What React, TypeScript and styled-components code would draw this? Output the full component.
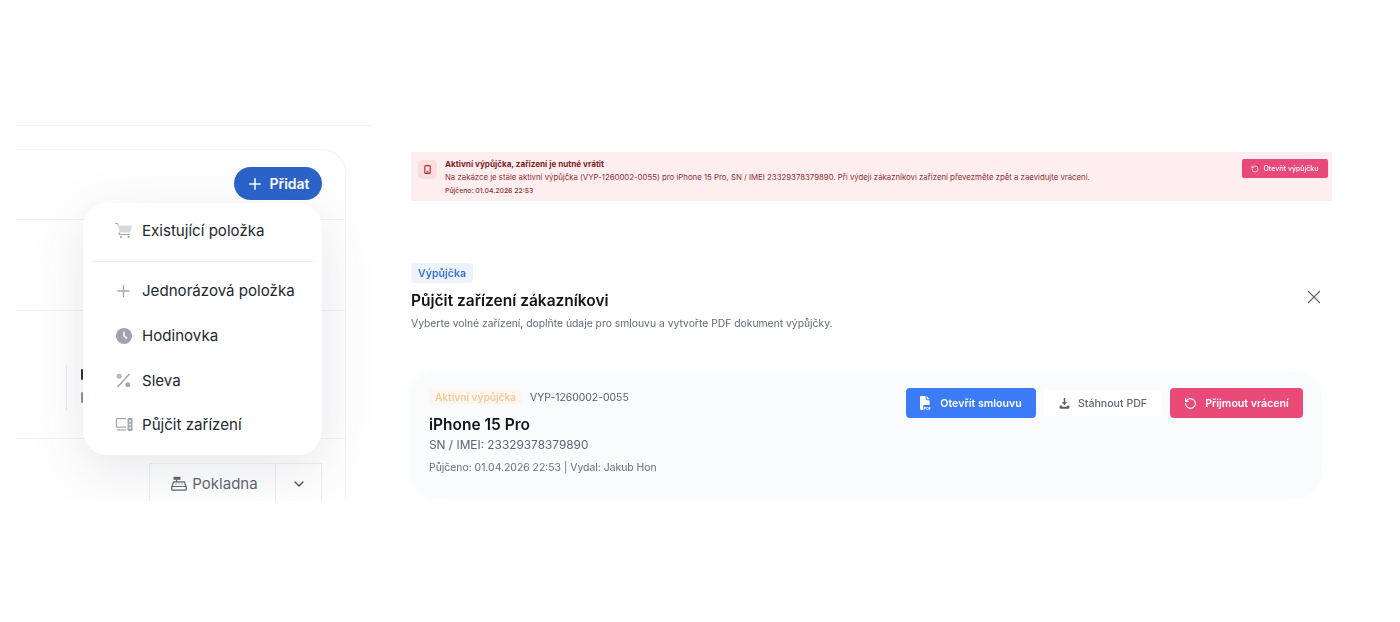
import React from "react"
import styled, { createGlobalStyle } from "styled-components"
import { ChevronDown, Plus, RotateCcw, X } from "lucide-react"

const GlobalStyle = createGlobalStyle`
  html, body {
    margin: 0;
    padding: 0;
    background: #fff;
    font-family: Inter, "Liberation Sans", sans-serif;
    overflow: hidden;
  }
`

const Page = styled.div`
  width: 1400px;
  height: 622px;
  display: flex;
  padding-left: 15px;
  box-sizing: border-box;
  overflow: hidden;
  filter: blur(0.3px);
`

const LeftColumn = styled.div`
  width: 357px;
  padding-top: 125px;
  flex-shrink: 0;
`

const TopLine = styled.div`
  height: 1px;
  background: #f3f4f6;
`

const Panel = styled.div`
  position: relative;
  margin-top: 23px;
  width: 331px;
  height: 352px;
  box-sizing: border-box;
  border-top: 1px solid #f4f5f7;
  border-right: 1px solid #f4f5f7;
  border-top-right-radius: 24px;
  background: #fff;
  clip-path: inset(-2px -40px 0 0);
`

const PanelRow = styled.div<{ $h: number }>`
  position: relative;
  height: ${p => p.$h}px;
  box-sizing: border-box;
  border-bottom: 1px solid #f1f3f5;
`

const AddRow = styled(PanelRow)`
  display: flex;
  justify-content: flex-end;
  padding: 17px 23px 0 0;
`

const AddButton = styled.button`
  width: 88px;
  height: 33px;
  border: none;
  border-radius: 17px;
  background: #2b63c9;
  color: #fff;
  font: 600 14px Inter, sans-serif;
  display: flex;
  align-items: center;
  justify-content: center;
  gap: 5px;
  padding: 0;
`

const CutOff = styled.div`
  position: absolute;
  left: 51px;
  top: 54px;
  height: 45px;
  border-left: 1px solid #e9ebee;
`

const HiddenLabel = styled.span<{ $top: number; $color: string }>`
  position: absolute;
  left: 66px;
  top: ${p => p.$top}px;
  width: 2px;
  height: 11px;
  border-radius: 1px;
  background: ${p => p.$color};
`

const FooterRow = styled.div`
  position: relative;
  display: flex;
  justify-content: flex-end;
  padding: 24px 23px 0 0;
`

const CashButton = styled.div`
  width: 127px;
  height: 40px;
  box-sizing: border-box;
  border: 1px solid #eceef1;
  border-bottom: none;
  padding-left: 4px;
  display: flex;
  align-items: center;
  justify-content: center;
  gap: 5px;
  color: #5d6773;
  font-size: 15px;
`

const ChevronButton = styled(CashButton)`
  width: 46px;
  padding-left: 0;
  border-left: none;
  color: #4b5563;
`

const Menu = styled.div`
  position: absolute;
  left: 68px;
  top: 53px;
  width: 239px;
  height: 252px;
  background: #fff;
  border-radius: 24px;
  box-shadow: 0 14px 56px rgba(60, 70, 90, 0.13);
  box-sizing: border-box;
  padding: 6px 9px 0;
`

const MenuItem = styled.div<{ $h: number }>`
  height: ${p => p.$h}px;
  display: flex;
  align-items: center;
  gap: 9px;
  padding-left: 22px;
  color: #222831;
  font-size: 15.1px;
`

const MenuDivider = styled.div`
  height: 1px;
  margin: 10px 0 6px;
  background: #eceef0;
`

const IconSlot = styled.span`
  width: 19px;
  height: 19px;
  display: flex;
  align-items: center;
  justify-content: center;
  color: #a4a7af;
  flex-shrink: 0;
`

const RightColumn = styled.div`
  margin-left: 39px;
  width: 921px;
  padding-top: 152px;
  flex-shrink: 0;
`

const Alert = styled.div`
  height: 49px;
  background: #ffeeef;
  display: flex;
  align-items: flex-start;
  padding: 7px 4px 0 7px;
  box-sizing: border-box;
`

const AlertIcon = styled.div`
  width: 19px;
  height: 19px;
  margin-top: 1px;
  border-radius: 5px;
  background: #fbdcdf;
  color: #b4232f;
  display: flex;
  align-items: center;
  justify-content: center;
  flex-shrink: 0;
`

const AlertBody = styled.div`
  flex: 1;
  margin-left: 8px;
  display: flex;
  flex-direction: column;
`

const AlertTitle = styled.div`
  color: #7f1d1d;
  font-size: 8.15px;
  font-weight: 700;
  line-height: 11px;
`

const AlertText = styled.div`
  color: #8f2f35;
  font-size: 7.8px;
  line-height: 11px;
  margin-top: 2px;
`

const AlertDate = styled.div`
  color: #8f2f35;
  font-size: 6.85px;
  font-weight: 500;
  line-height: 10px;
  margin-top: 3px;
`

const AlertButton = styled.button`
  width: 86px;
  height: 19px;
  border: none;
  border-radius: 2px;
  background: #e8487a;
  color: #fff;
  font: 500 7px Inter, sans-serif;
  display: flex;
  align-items: center;
  justify-content: center;
  gap: 4px;
  padding: 0;
  flex-shrink: 0;
`

const Header = styled.div`
  position: relative;
  margin-top: 62px;
`

const Tag = styled.span`
  display: flex;
  width: fit-content;
  align-items: center;
  height: 20px;
  padding: 0 7px;
  border-radius: 4px;
  background: #edf3fd;
  color: #3a72d8;
  font-size: 10.6px;
  font-weight: 600;
`

const Title = styled.h2`
  margin: 8px 0 0;
  color: #111418;
  font-size: 15.5px;
  font-weight: 600;
  line-height: 20px;
`

const Subtitle = styled.p`
  margin: 5px 0 0;
  color: #626b76;
  font-size: 10.35px;
  line-height: 14px;
`

const CloseButton = styled.div`
  position: absolute;
  right: 7px;
  top: 23px;
  color: #5f6670;
  display: flex;
`

const LoanCard = styled.div`
  margin-top: 42px;
  width: 910px;
  height: 126px;
  box-sizing: border-box;
  border-radius: 24px;
  background: #f9fbfd;
  box-shadow: 0 0 12px #f9fbfd;
  padding: 16px 18px 0;
  display: flex;
  justify-content: space-between;
  align-items: flex-start;
`

const LoanInfo = styled.div`
  display: flex;
  flex-direction: column;
`

const MetaRow = styled.div`
  display: flex;
  align-items: center;
  gap: 8px;
  height: 18px;
`

const StatusBadge = styled.span`
  padding: 2px 6px;
  border-radius: 4px;
  background: #fdf7f1;
  color: #f6c89a;
  font-size: 10.1px;
  font-weight: 600;
`

const LoanId = styled.span`
  color: #555e69;
  font-size: 10.4px;
`

const DeviceName = styled.div`
  margin-top: 9px;
  color: #121518;
  font-size: 15.5px;
  font-weight: 600;
  line-height: 20px;
`

const Serial = styled.div`
  margin-top: 2px;
  color: #5b6470;
  font-size: 11.85px;
  line-height: 16px;
`

const LoanMeta = styled.div`
  margin-top: 8px;
  color: #66707b;
  font-size: 10.4px;
  line-height: 14px;
`

const Actions = styled.div`
  display: flex;
  align-items: center;
  gap: 8px;
`

const ActionButton = styled.button<{ $bg: string; $color: string; $w: number; $h: number; $weight: number }>`
  width: ${p => p.$w}px;
  height: ${p => p.$h}px;
  border: none;
  border-radius: 4px;
  background: ${p => p.$bg};
  color: ${p => p.$color};
  font: ${p => p.$weight} 10.6px Inter, sans-serif;
  display: flex;
  align-items: center;
  justify-content: center;
  gap: 8px;
  padding: 0;
`

const CartIcon = () => (
  <svg width="19" height="17" viewBox="0 0 19 17">
    <path d="M1 1.5h2.6l.5 2" fill="none" stroke="#b5b7bd" strokeWidth="1.2" />
    <path d="M4 3.5h14l-1.6 7H5.6z" fill="#d6d8dc" />
    <path d="M5.4 10.5l-.4 2h11" fill="none" stroke="#a4a7af" strokeWidth="1.2" />
    <circle cx="7" cy="15" r="1.1" fill="#a4a7af" />
    <circle cx="14.5" cy="15" r="1.1" fill="#a4a7af" />
  </svg>
)

const ClockIcon = () => (
  <svg width="16" height="16" viewBox="0 0 16 16">
    <circle cx="8" cy="8" r="8" fill="#a0a2ad" />
    <path d="M8 3.4V8l3.2 2.4" fill="none" stroke="#fff" strokeWidth="1.5" />
  </svg>
)

const PercentIcon = () => (
  <svg width="15" height="15" viewBox="0 0 15 15">
    <path d="M13.5 1L1.5 14" stroke="#a4a7af" strokeWidth="1.5" />
    <circle cx="3.2" cy="3.2" r="2.5" fill="#b5b7bd" />
    <circle cx="11.8" cy="11.8" r="2.5" fill="#a4a7af" />
  </svg>
)

const DevicesIcon = () => (
  <svg width="18" height="15" viewBox="0 0 18 15">
    <path d="M11 1.6H2.4a1 1 0 0 0-1 1v6.6a1 1 0 0 0 1 1H11" fill="none" stroke="#a4a7af" strokeWidth="1.2" />
    <path d="M2 13h9" stroke="#a4a7af" strokeWidth="1.2" />
    <rect x="12.5" y="1" width="5" height="13" rx="1.2" fill="#a4a7af" />
    <circle cx="15" cy="4" r="0.9" fill="#fff" />
    <circle cx="15" cy="7.5" r="0.9" fill="#fff" />
    <circle cx="15" cy="11" r="0.9" fill="#fff" />
  </svg>
)

const RegisterIcon = () => (
  <svg width="16" height="15" viewBox="0 0 16 15" fill="none" stroke="#5d6773" strokeWidth="1.2">
    <rect x="2.5" y="0.8" width="7" height="3" fill="#5d6773" stroke="none" />
    <path d="M5.5 3.8v2M2.6 5.8h10.8L15 10.5H1z" />
    <rect x="0.8" y="10.5" width="14.4" height="3.7" rx="0.8" />
    <path d="M4.5 8h1M7.5 8h1M10.5 8h1" />
  </svg>
)

const PhoneIcon = () => (
  <svg width="7" height="9" viewBox="0 0 7 9" fill="none" stroke="currentColor" strokeWidth="1.1">
    <rect x="0.8" y="0.6" width="5.4" height="7.8" rx="1" />
    <path d="M2.4 6.8h2.2" />
  </svg>
)

const PdfIcon = () => (
  <svg width="12" height="14" viewBox="0 0 12 14">
    <path d="M0 1.2A1.2 1.2 0 0 1 1.2 0H5.4l.4 3.2a1 1 0 0 0 1 .9L9.6 4.4V9H3.4v5H1.2A1.2 1.2 0 0 1 0 12.8z" fill="#fff" />
    <path d="M6.6 0l3 3.2H6.6z" fill="#fff" />
    <text x="3.8" y="13.6" fontSize="3.6" fontWeight="700" fill="#fff" fontFamily="Inter, sans-serif">PDF</text>
  </svg>
)

const DownloadIcon = () => (
  <svg width="11" height="11" viewBox="0 0 11 11" fill="#59626e">
    <path d="M4.7 0h1.6v4.2h2L5.5 7.2 2.7 4.2h2z" />
    <path d="M0.6 7.4h1.8L3.6 8.7h3.8l1.2-1.3h1.8v2.4a1 1 0 0 1-1 1H1.6a1 1 0 0 1-1-1z" />
  </svg>
)

export default function App() {
  return (
    <Page>
      <GlobalStyle />
      <LeftColumn>
        <TopLine />
        <Panel>
          <AddRow $h={70}>
            <AddButton>
              <Plus size={18} strokeWidth={2} />
              Přidat
            </AddButton>
          </AddRow>
          <PanelRow $h={91} />
          <PanelRow $h={128}>
            <CutOff />
            <HiddenLabel $top={58} $color="#2a3038" />
            <HiddenLabel $top={81} $color="#8a919b" />
          </PanelRow>
          <FooterRow>
            <CashButton>
              <RegisterIcon />
              Pokladna
            </CashButton>
            <ChevronButton>
              <ChevronDown size={16} />
            </ChevronButton>
          </FooterRow>
          <Menu>
            <MenuItem $h={42}>
              <IconSlot><CartIcon /></IconSlot>
              Existující položka
            </MenuItem>
            <MenuDivider />
            <MenuItem $h={45}>
              <IconSlot><Plus size={20} strokeWidth={1.6} /></IconSlot>
              Jednorázová položka
            </MenuItem>
            <MenuItem $h={45}>
              <IconSlot><ClockIcon /></IconSlot>
              Hodinovka
            </MenuItem>
            <MenuItem $h={44}>
              <IconSlot><PercentIcon /></IconSlot>
              Sleva
            </MenuItem>
            <MenuItem $h={45}>
              <IconSlot><DevicesIcon /></IconSlot>
              Půjčit zařízení
            </MenuItem>
          </Menu>
        </Panel>
      </LeftColumn>

      <RightColumn>
        <Alert>
          <AlertIcon><PhoneIcon /></AlertIcon>
          <AlertBody>
            <AlertTitle>Aktivní výpůjčka, zařízení je nutné vrátit</AlertTitle>
            <AlertText>
              Na zakázce je stále aktivní výpůjčka (VYP-1260002-0055) pro iPhone 15 Pro, SN / IMEI 23329378379890. Při výdeji zákazníkovi zařízení převezměte zpět a zaevidujte vrácení.
            </AlertText>
            <AlertDate>Půjčeno: 01.04.2026 22:53</AlertDate>
          </AlertBody>
          <AlertButton>
            <RotateCcw size={8} strokeWidth={2} />
            Otevřít výpůjčku
          </AlertButton>
        </Alert>

        <Header>
          <Tag>Výpůjčka</Tag>
          <Title>Půjčit zařízení zákazníkovi</Title>
          <Subtitle>Vyberte volné zařízení, doplňte údaje pro smlouvu a vytvořte PDF dokument výpůjčky.</Subtitle>
          <CloseButton><X size={22} strokeWidth={1.3} /></CloseButton>
        </Header>

        <LoanCard>
          <LoanInfo>
            <MetaRow>
              <StatusBadge>Aktivní výpůjčka</StatusBadge>
              <LoanId>VYP-1260002-0055</LoanId>
            </MetaRow>
            <DeviceName>iPhone 15 Pro</DeviceName>
            <Serial>SN / IMEI: 23329378379890</Serial>
            <LoanMeta>Půjčeno: 01.04.2026 22:53 | Vydal: Jakub Hon</LoanMeta>
          </LoanInfo>
          <Actions>
            <ActionButton $bg="#3b7cf6" $color="#fff" $w={130} $h={30} $weight={600}>
              <PdfIcon />
              Otevřít smlouvu
            </ActionButton>
            <ActionButton $bg="#fff" $color="#5f6670" $w={118} $h={26} $weight={500}>
              <DownloadIcon />
              Stáhnout PDF
            </ActionButton>
            <ActionButton $bg="#ea4a78" $color="#fff" $w={133} $h={30} $weight={600}>
              <RotateCcw size={13} strokeWidth={2} />
              Přijmout vrácení
            </ActionButton>
          </Actions>
        </LoanCard>
      </RightColumn>
    </Page>
  )
}
